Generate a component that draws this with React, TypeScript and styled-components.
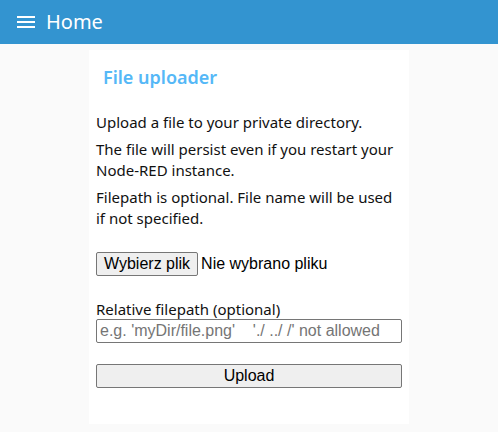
import React from "react";
import styled, { createGlobalStyle } from "styled-components";

const Global = createGlobalStyle`
  html, body { margin: 0; padding: 0; background: #fafafa; }
  body { font-family: "Noto Sans", "Open Sans", sans-serif; }
`;

const Page = styled.div`
  width: 498px;
  height: 432px;
  background: #fafafa;
  display: flex;
  flex-direction: column;
  overflow: hidden;
`;

const Toolbar = styled.header`
  height: 44px;
  background: #3394d0;
  display: flex;
  align-items: center;
  padding-left: 17px;
  gap: 11px;
  color: #fff;
  flex-shrink: 0;
`;

const ToolbarTitle = styled.h1`
  margin: 0;
  font-size: 20px;
  font-weight: 400;
  line-height: 1;
  color: #fff;
`;

const Main = styled.main`
  display: flex;
  justify-content: center;
  padding-top: 6px;
`;

const Card = styled.section`
  width: 320px;
  background: #fff;
  padding: 15px 7px 36px 7px;
  box-sizing: border-box;
  display: flex;
  flex-direction: column;
`;

const CardTitle = styled.h2`
  margin: 0 0 23px 7px;
  font-size: 18px;
  font-weight: 600;
  color: #55b8f7;
  line-height: 24px;
`;

const Para = styled.p`
  margin: 0 0 6px 0;
  font-size: 15px;
  line-height: 21px;
  color: #111;
`;

const FileRow = styled.div`
  display: flex;
  align-items: center;
  margin-top: 17px;
  gap: 3px;
  font-family: "Liberation Sans", Arial, sans-serif;
  font-size: 16px;
  color: #000;
`;

const NativeButton = styled.button<{ $wide?: boolean }>`
  font-family: "Liberation Sans", Arial, sans-serif;
  font-size: 16px;
  color: #000;
  background: #efefef;
  border: 1px solid #767676;
  border-radius: 2px;
  height: 24px;
  padding: 0 7px;
  width: ${(p) => (p.$wide ? "306px" : "auto")};
  cursor: pointer;
`;

const Label = styled.label`
  display: block;
  margin-top: 24px;
  font-size: 15px;
  line-height: 18px;
  color: #111;
`;

const TextInput = styled.input`
  display: block;
  width: 306px;
  height: 24px;
  box-sizing: border-box;
  margin-top: 1px;
  border: 1px solid #767676;
  border-radius: 2px;
  padding: 0 3px;
  font-family: "Liberation Sans", Arial, sans-serif;
  font-size: 16px;
  &::placeholder { color: #757575; }
`;

const UploadWrap = styled.div`
  margin-top: 21px;
`;

function Hamburger() {
  return (
    <svg width="18" height="14" viewBox="0 0 18 14" fill="none" stroke="#fff" strokeWidth="2">
      <line x1="0" y1="2" x2="18" y2="2" />
      <line x1="0" y1="7" x2="18" y2="7" />
      <line x1="0" y1="12" x2="18" y2="12" />
    </svg>
  );
}

export default function App() {
  return (
    <Page>
      <Global />
      <Toolbar>
        <Hamburger />
        <ToolbarTitle>Home</ToolbarTitle>
      </Toolbar>
      <Main>
        <Card>
          <CardTitle>File uploader</CardTitle>
          <Para>Upload a file to your private directory.</Para>
          <Para>The file will persist even if you restart your Node-RED instance.</Para>
          <Para>Filepath is optional. File name will be used if not specified.</Para>
          <FileRow>
            <NativeButton>Wybierz plik</NativeButton>
            <span>Nie wybrano pliku</span>
          </FileRow>
          <Label htmlFor="fp">Relative filepath (optional)</Label>
          <TextInput id="fp" placeholder="e.g. 'myDir/file.png'    './ ../ /' not allowed" />
          <UploadWrap>
            <NativeButton $wide>Upload</NativeButton>
          </UploadWrap>
        </Card>
      </Main>
    </Page>
  );
}
